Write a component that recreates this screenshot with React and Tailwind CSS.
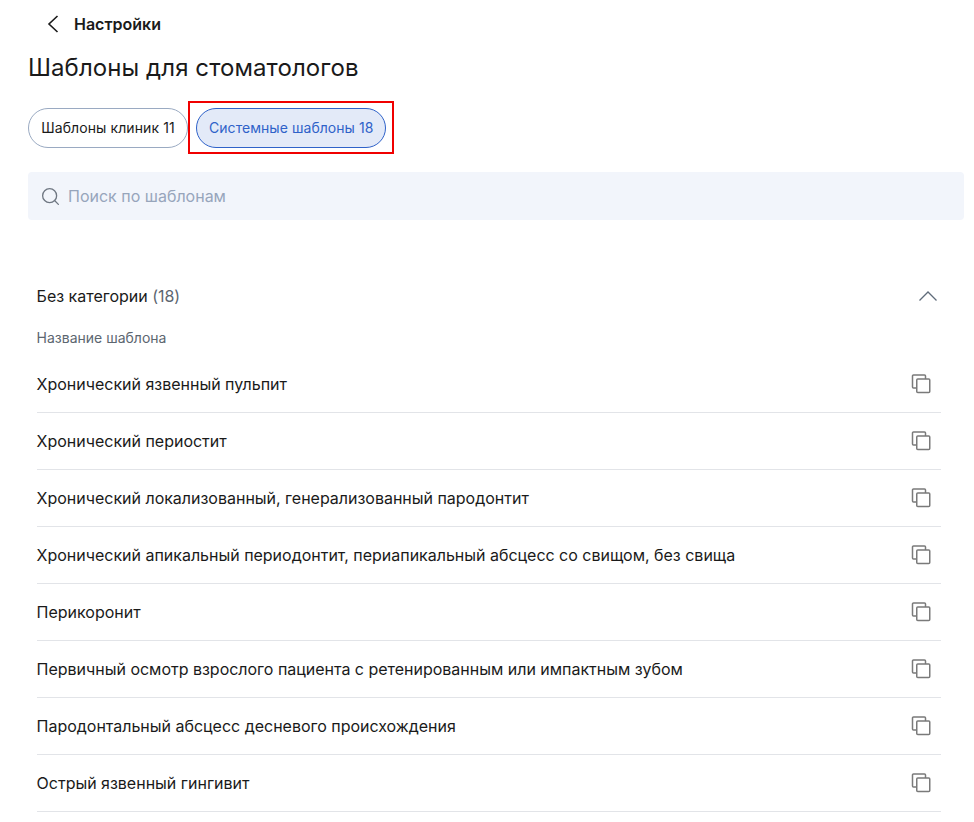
import React from 'react';
import { Search } from 'lucide-react';

const templates = [
  'Хронический язвенный пульпит',
  'Хронический периостит',
  'Хронический локализованный, генерализованный пародонтит',
  'Хронический апикальный периодонтит, периапикальный абсцесс со свищом, без свища',
  'Перикоронит',
  'Первичный осмотр взрослого пациента с ретенированным или импактным зубом',
  'Пародонтальный абсцесс десневого происхождения',
  'Острый язвенный гингивит',
];

function CopyIcon() {
  return (
    <svg width="20" height="20" viewBox="0 0 20 20" fill="none" stroke="#7a7a7a" strokeWidth="1.5">
      <path d="M5.5 14H2.5a1 1 0 0 1-1-1V2a1 1 0 0 1 1-1h11a1 1 0 0 1 1 1v3" />
      <rect x="5.75" y="5" width="13" height="13.5" rx="1" />
    </svg>
  );
}

function TemplateRow({ name }) {
  return (
    <div className="flex h-[57px] items-center justify-between border-b border-[#e2e4e8] pr-[10px]">
      <span className="text-base tracking-[-0.015px] text-[#1a1a1a]">{name}</span>
      <CopyIcon />
    </div>
  );
}

export default function App() {
  return (
    <div className="h-[822px] overflow-hidden bg-white pl-[28px] pr-[10px] font-['Inter',sans-serif]">
      <div className="flex h-[48px] items-center pl-[19px]">
        <svg width="12" height="18" viewBox="0 0 12 18" fill="none" stroke="#1a1a1a" strokeWidth="1.6">
          <path d="M10.5 1 2 9l8.5 8" />
        </svg>
        <span className="ml-[15px] text-base font-semibold text-[#1a1a1a]">Настройки</span>
      </div>
      <h1 className="mt-[4px] text-2xl leading-[32px] tracking-[0.08px] text-[#1a1a1a]">Шаблоны для стоматологов</h1>
      <div className="mt-[24px] flex gap-[8px]">
        <button type="button" className="h-[40px] w-[160px] rounded-full border border-[#9aaac2] bg-white text-sm tracking-[0.1px] text-[#1a1a1a]">
          Шаблоны клиник 11
        </button>
        <div className="relative">
          <button type="button" className="h-[40px] rounded-full border border-[#2f62c9] bg-[#e3eaf8] px-[12px] text-sm tracking-[0.05px] text-[#2f62c9]">
            Системные шаблоны 18
          </button>
          <div className="pointer-events-none absolute -inset-x-[8px] -top-[7px] -bottom-[6px] border-2 border-[#f00000]" />
        </div>
      </div>
      <div className="mt-[24px] flex h-[48px] items-center gap-[7px] rounded bg-[#f2f5fb] pl-[12px]">
        <Search size={21} strokeWidth={1.5} className="text-[#6f7782]" />
        <span className="text-base text-[#97a5bb]">Поиск по шаблонам</span>
      </div>
      <div className="mt-[64px] pl-[8.6px] pr-[23px]">
        <div className="flex h-[24px] items-center justify-between">
          <span className="text-base tracking-[-0.015px] text-[#1a1a1a]">
            Без категории <span className="text-[#5c6670]">(18)</span>
          </span>
          <svg width="20" height="12" viewBox="0 0 20 12" fill="none" stroke="#5f6b7a" strokeWidth="1.3" className="mr-[3px]">
            <path d="m1.5 10.5 8.5-8.5 8.5 8.5" />
          </svg>
        </div>
        <div className="mt-[20px] text-sm leading-[20px] text-[#5c6670]">Название шаблона</div>
        <div className="mt-[8px]">
          {templates.map((name) => (
            <TemplateRow key={name} name={name} />
          ))}
        </div>
      </div>
    </div>
  );
}
